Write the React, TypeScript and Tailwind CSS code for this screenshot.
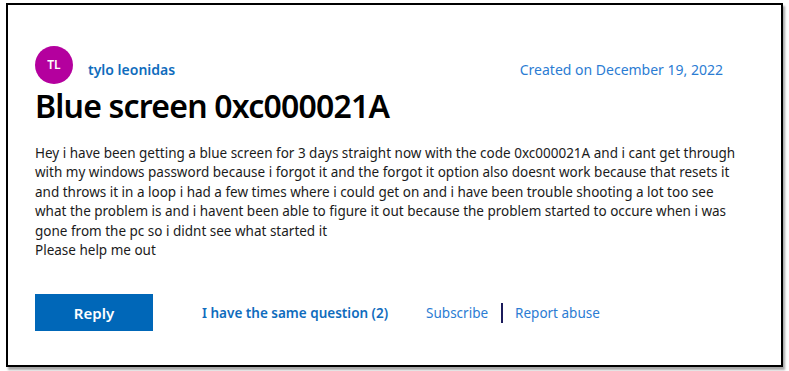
const lines = [
  "Hey i have been getting a blue screen for 3 days straight now with the code 0xc000021A and i cant get through",
  "with my windows password because i forgot it and the forgot it option also doesnt work because that resets it",
  "and throws it in a loop i had a few times where i could get on and i have been trouble shooting a lot too see",
  "what the problem is and i havent been able to figure it out because the problem started to occure when i was",
  "gone from the pc so i didnt see what started it",
  "Please help me out",
];

const App = () => {
  return (
    <div className="w-[789px] h-[371px] bg-white pl-[6px] pt-[3px] font-['Noto_Sans',sans-serif]">
      <div className="w-[777px] h-[364px] border-2 border-black bg-white shadow-[2px_3px_2px_rgba(0,0,0,0.35)] pl-[27px] pr-[58px] pt-[41px]">
        {/* Author row */}
        <div className="flex items-center h-[38px]">
          <div className="w-[38px] h-[38px] rounded-full bg-[#b4009e] flex items-center justify-center text-white text-[12px] font-semibold">
            TL
          </div>
          <span className="ml-[15px] mt-[8px] text-[14px] font-semibold text-[#0f6cbd]">tylo leonidas</span>
          <span className="ml-auto mt-[8px] text-[14px] text-[#2b7cd3]">Created on December 19, 2022</span>
        </div>

        {/* Title */}
        <h1 className="mt-[2px] text-[32px] leading-[40px] font-semibold tracking-[-0.8px] text-black">
          Blue screen 0xc000021A
        </h1>

        {/* Body */}
        <div className="mt-[18px] text-[13.5px] leading-[19.4px] text-[#1b1b1b] whitespace-nowrap">
          {lines.map((l) => (
            <div key={l}>{l}</div>
          ))}
        </div>

        {/* Actions */}
        <div className="mt-[34px] flex items-center">
          <button className="w-[118px] h-[37px] bg-[#0067b8] text-white text-[15px] font-semibold">Reply</button>
          <span className="ml-[49px] text-[13.5px] font-semibold text-[#0f6cbd]">I have the same question (2)</span>
          <span className="ml-[38px] text-[13.5px] text-[#2b7cd3]">Subscribe</span>
          <span className="ml-[13px] w-[2px] h-[20px] bg-[#1b1b5b]" />
          <span className="ml-[12px] text-[13.5px] text-[#2b7cd3]">Report abuse</span>
        </div>
      </div>
    </div>
  );
};

export default App;
